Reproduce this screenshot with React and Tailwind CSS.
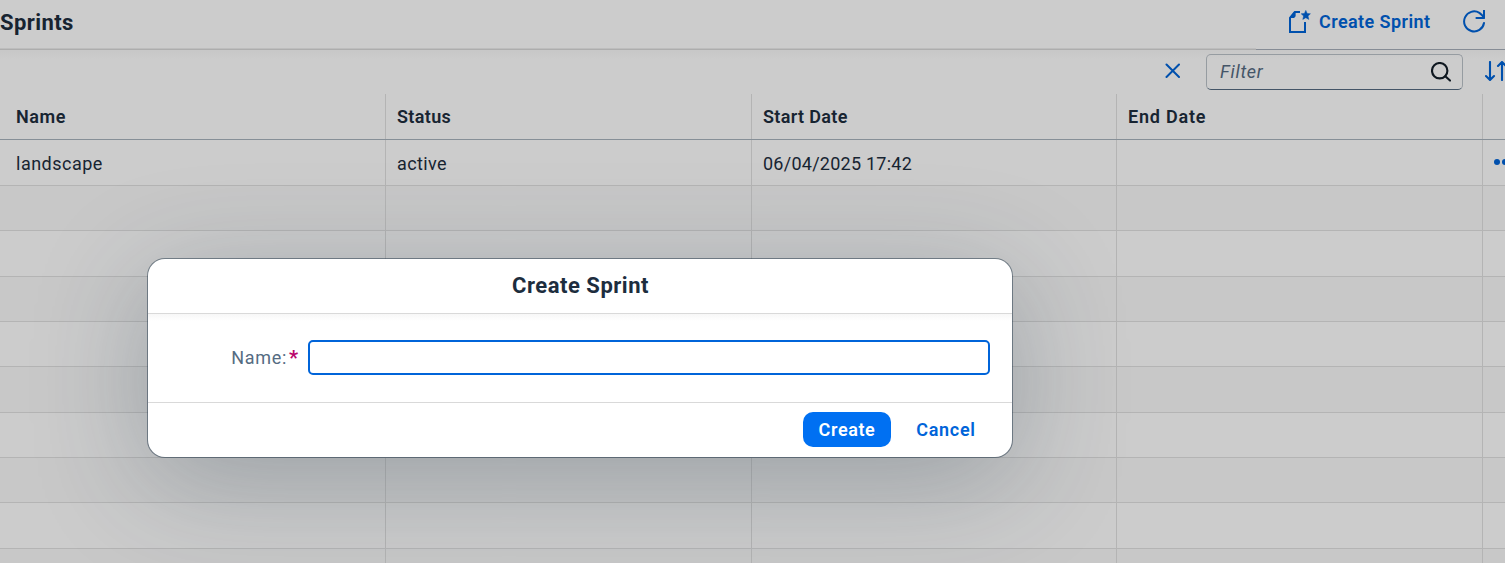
import React from "react";

const columns = ["Name", "Status", "Start Date", "End Date", ""];

const rows = [
  { height: "h-[46px]", cells: ["landscape", "active", "06/04/2025 17:42", "", ""], actions: true },
  { height: "h-[45px]" },
  { height: "h-[46px]" },
  { height: "h-[45px]" },
  { height: "h-[45px]" },
  { height: "h-[46px]" },
  { height: "h-[45px]" },
  { height: "h-[45px]" },
  { height: "h-[46px]" },
  { height: "h-[45px]" },
];

const grid = "grid grid-cols-[386px_366px_365px_366px_90px] shrink-0";

const headTracking = ["tracking-[0.6px]", "tracking-[0.35px]", "tracking-[0.35px]", "tracking-[0.8px]", ""];
const cellTracking = ["tracking-[0.5px]", "tracking-[0.4px]", "tracking-[0.25px]", "", ""];

function CreateIcon() {
  return (
    <svg className="h-[24px] w-[24px] shrink-0" viewBox="0 0 24 24" fill="none" stroke="currentColor" strokeWidth="2">
      <path d="M13 2H7.8L3 7.8V22H18V12" />
      <path d="M8.6 2V5.2Q8.6 8 5.6 8H3V7L7 2Z" fill="currentColor" stroke="none" />
      <path d="M18.8 0.4L20.2 3.5L23.4 3.8L21 6L21.8 9.4L18.8 7.7L15.8 9.4L16.6 6L14.2 3.8L17.4 3.5Z" fill="currentColor" stroke="currentColor" strokeWidth="0.5" />
    </svg>
  );
}

function RefreshIcon() {
  return (
    <svg className="h-[24px] w-[24px]" viewBox="0 0 24 24" fill="none" stroke="currentColor" strokeWidth="2">
      <path d="M22 13A10 10 0 1 1 17.4 2.9Q20 4.8 22 7.6" strokeLinecap="round" />
      <path d="M22 0.6V8H14.4" strokeLinecap="round" strokeLinejoin="round" />
    </svg>
  );
}

function Toolbar() {
  return (
    <header className="flex h-[50px] shrink-0 flex-col">
      <div className="flex h-[48px] shrink-0 items-center justify-between pr-[19px] pb-1">
        <h1 className="mt-[2px] text-[22px] leading-7 font-bold tracking-[0.4px]">Sprints</h1>
        <div className="flex items-center text-[#0064d9]">
          <CreateIcon />
          <span className="ml-[8px] w-[112px] text-[18px] leading-6 font-[560] tracking-[0.42px] whitespace-nowrap">Create Sprint</span>
          <span className="mb-[1px] ml-[31px]"><RefreshIcon /></span>
        </div>
      </div>
      <div className="grid h-[2px] grid-cols-[1256px_1fr]">
        <div className="border-b border-[#d9d9d9] bg-[#ededed]" />
        <div className="border-b border-[#a8b0bb]" />
      </div>
    </header>
  );
}

function FilterBar() {
  return (
    <div className="flex h-[44px] shrink-0 items-start bg-linear-to-b from-[#fafafa] to-white to-20% pt-[4px] pl-[1165px]">
      <svg className="mt-[9px] h-[15px] w-[15px] shrink-0 text-[#0064d9]" viewBox="0 0 15 15" stroke="currentColor" strokeWidth="2" strokeLinecap="round">
        <path d="M1.5 1.5L14 14M14 1.5L1.5 14" />
      </svg>
      <div className="ml-[26px] flex h-[36px] w-[257px] shrink-0 items-center justify-between rounded-[5px] border border-[#bcc3ca] border-b-[#556b81] pr-[11px] pl-[13px]">
        <span className="text-[18px] leading-6 tracking-[0.75px] text-[#556b82] italic">Filter</span>
        <svg className="h-[20px] w-[20px] text-[#131e29]" viewBox="0 0 20 20" fill="none" stroke="currentColor" strokeWidth="2.1" strokeLinecap="round">
          <circle cx="8.7" cy="8.7" r="7.7" />
          <path d="M14.3 14.3L19 18.6" />
        </svg>
      </div>
      <svg className="mt-[7px] ml-[22px] h-[20px] w-[24px] shrink-0 text-[#0064d9]" viewBox="0 0 24 20" fill="none" stroke="currentColor" strokeWidth="2.1" strokeLinecap="round" strokeLinejoin="round">
        <path d="M5 1V19M1 15L5 19L9 15M17 19V1M13 5L17 1L21 5" />
      </svg>
    </div>
  );
}

function Table() {
  return (
    <section className="flex flex-col">
      <div className={grid + " h-[46px] border-b border-[#a8b3bd]"}>
        {columns.map((name, i) => (
          <div key={i} className={"flex items-center border-r border-[#e2e2e2] text-[18px] leading-6 font-[560] " + (i === 0 ? "pl-4 " : "pl-[11px] ") + headTracking[i]}>
            {name}
          </div>
        ))}
      </div>
      {rows.map((row, r) => (
        <div key={r} className={grid + " border-b border-[#e2e2e2] " + row.height + (r % 2 ? " bg-[#fafafa]" : "")}>
          {columns.map((_, i) => (
            <div key={i} className={"flex items-center border-r border-[#e2e2e2] pt-[2px] text-[18px] leading-6 " + (i === 0 ? "pl-4 " : "pl-[11px] ") + cellTracking[i]}>
              {row.cells && row.cells[i]}
              {row.actions && i === 4 && (
                <svg className="mb-[4px] h-[6px] w-[22px] text-[#0064d9]" viewBox="0 0 22 6" fill="currentColor">
                  <circle cx="3" cy="3" r="3" />
                  <circle cx="11" cy="3" r="3" />
                  <circle cx="19" cy="3" r="3" />
                </svg>
              )}
            </div>
          ))}
        </div>
      ))}
    </section>
  );
}

function Dialog() {
  return (
    <div className="absolute inset-0 bg-black/20 pt-[259px] pl-[148px]">
      <div
        role="dialog"
        className="flex h-[198px] w-[864px] flex-col overflow-hidden rounded-[17px] bg-white shadow-[0_0_0_1px_rgba(34,53,72,0.5),0_23px_114px_0_rgba(34,53,72,0.28)]"
      >
        <div className="flex h-[54px] shrink-0 items-center justify-center">
          <h2 className="ml-[1px] text-[22px] leading-7 font-bold tracking-[0.52px]">Create Sprint</h2>
        </div>
        <div className="flex h-[89px] shrink-0 items-center border-t border-[#d9d9d9] bg-linear-to-b from-[#f7f7f7] to-white to-8% pr-[22px] pb-[2px]">
          <div className="flex w-[160px] justify-end pt-[1px] pr-[10px] text-[18px] leading-6">
            <span className="tracking-[0.65px] text-[#556b82]">Name:</span>
            <span className="ml-[2px] text-[20px] font-bold text-[#ba066c]">*</span>
          </div>
          <input className="h-[35px] w-[682px] rounded-[5px] border-2 border-[#0064d9] bg-white px-3 outline-none" />
        </div>
        <div className="flex h-[55px] shrink-0 items-start justify-end border-t border-[#d9d9d9] pt-[9px] pr-[20px] text-[18px]">
          <button className="h-[35px] w-[88px] rounded-[10px] bg-[#0070f2] font-semibold tracking-[0.6px] text-white">Create</button>
          <button className="ml-[9px] h-[35px] w-[92px] font-[560] tracking-[0.7px] text-[#0064d9]">Cancel</button>
        </div>
      </div>
    </div>
  );
}

export default function App() {
  return (
    <div className="relative flex h-[563px] w-[1505px] flex-col overflow-hidden bg-white font-['Roboto',sans-serif] text-[#1d2d3e]">
      <Toolbar />
      <FilterBar />
      <Table />
      <Dialog />
    </div>
  );
}
